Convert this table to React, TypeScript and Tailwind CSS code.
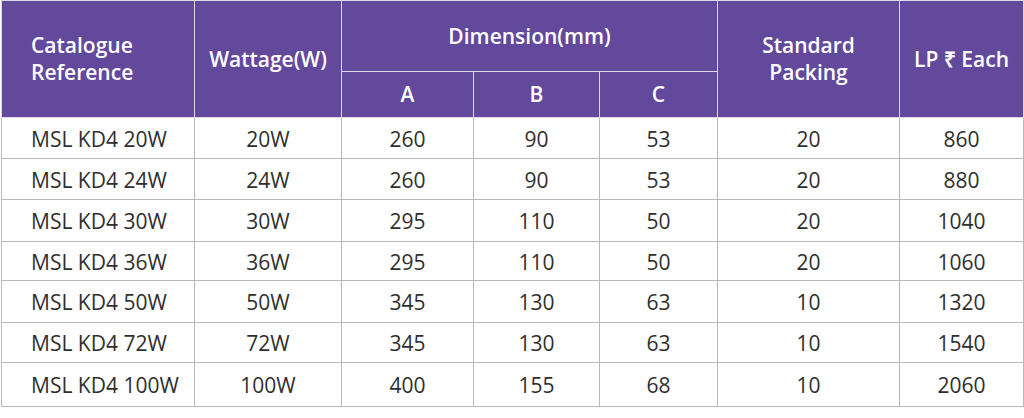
const rows = [
  { ref: "MSL KD4 20W", watt: "20W", a: "260", b: "90", c: "53", pack: "20", lp: "860", h: "h-[41px]" },
  { ref: "MSL KD4 24W", watt: "24W", a: "260", b: "90", c: "53", pack: "20", lp: "880", h: "h-[41px]" },
  { ref: "MSL KD4 30W", watt: "30W", a: "295", b: "110", c: "50", pack: "20", lp: "1040", h: "h-[42px]" },
  { ref: "MSL KD4 36W", watt: "36W", a: "295", b: "110", c: "50", pack: "20", lp: "1060", h: "h-[39px]" },
  { ref: "MSL KD4 50W", watt: "50W", a: "345", b: "130", c: "63", pack: "10", lp: "1320", h: "h-[42px]" },
  { ref: "MSL KD4 72W", watt: "72W", a: "345", b: "130", c: "63", pack: "10", lp: "1540", h: "h-[40px]" },
  { ref: "MSL KD4 100W", watt: "100W", a: "400", b: "155", c: "68", pack: "10", lp: "2060", h: "h-[44px]" },
];

export default function App() {
  return (
    <div className="w-[1024px] h-[418px] bg-white pl-px font-['Open_Sans',sans-serif] overflow-hidden">
      <table className="w-[1022px] border-collapse table-fixed text-[21px]">
        <colgroup>
          <col className="w-[193px]" />
          <col className="w-[147px]" />
          <col className="w-[132px]" />
          <col className="w-[126px]" />
          <col className="w-[118px]" />
          <col className="w-[182px]" />
          <col className="w-[124px]" />
        </colgroup>
        <thead className="bg-[#62499c] text-white font-semibold leading-[27px]">
          <tr className="h-[71px]">
            <th rowSpan={2} className="border border-[#ddd6ec] text-left pl-[29px] font-semibold">
              Catalogue
              <br />
              Reference
            </th>
            <th rowSpan={2} className="border border-[#ddd6ec] font-semibold">
              Wattage(W)
            </th>
            <th colSpan={3} className="border border-[#ddd6ec] font-semibold">
              Dimension(mm)
            </th>
            <th rowSpan={2} className="border border-[#ddd6ec] font-semibold">
              Standard
              <br />
              Packing
            </th>
            <th rowSpan={2} className="border border-[#ddd6ec] font-semibold">
              LP ₹ Each
            </th>
          </tr>
          <tr className="h-[46px]">
            <th className="border border-[#ddd6ec] font-semibold">A</th>
            <th className="border border-[#ddd6ec] font-semibold">B</th>
            <th className="border border-[#ddd6ec] font-semibold">C</th>
          </tr>
        </thead>
        <tbody className="text-[#2f2f2f]">
          {rows.map((r) => (
            <tr key={r.ref} className={r.h}>
              <td className="border border-[#b9b9bd] pl-[29px] pt-[3px]">{r.ref}</td>
              <td className="border border-[#b9b9bd] text-center pt-[3px]">{r.watt}</td>
              <td className="border border-[#b9b9bd] text-center pt-[3px]">{r.a}</td>
              <td className="border border-[#b9b9bd] text-center pt-[3px]">{r.b}</td>
              <td className="border border-[#b9b9bd] text-center pt-[3px]">{r.c}</td>
              <td className="border border-[#b9b9bd] text-center pt-[3px]">{r.pack}</td>
              <td className="border border-[#b9b9bd] text-center pt-[3px]">{r.lp}</td>
            </tr>
          ))}
        </tbody>
      </table>
    </div>
  );
}
